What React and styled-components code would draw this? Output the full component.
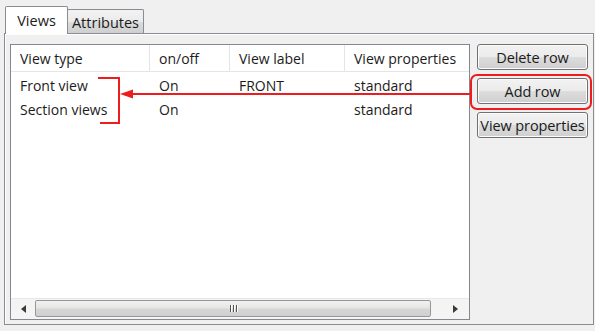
import React from 'react';
import styled, { createGlobalStyle } from 'styled-components';

const GlobalStyle = createGlobalStyle`
  html, body {
    margin: 0;
    padding: 0;
    background: #f0f0f0;
  }
  body {
    font-family: 'Open Sans', 'Noto Sans', 'DejaVu Sans', sans-serif;
    font-size: 14px;
    color: #1b1b1b;
  }
`;

const Window = styled.div`
  position: relative;
  width: 595px;
  height: 331px;
  padding-top: 6px;
  box-sizing: border-box;
  background: #f0f0f0;
  overflow: hidden;
`;

const TabBar = styled.div`
  display: flex;
  align-items: flex-end;
  height: 27px;
  padding-left: 5px;
  position: relative;
  z-index: 1;
`;

const Tab = styled.div`
  box-sizing: border-box;
  display: flex;
  align-items: center;
  justify-content: center;
  border: 1px solid #898c95;
  border-bottom: none;
  border-radius: 2px 2px 0 0;
  width: ${(p) => p.$width}px;
  height: ${(p) => (p.$active ? 28 : 24)}px;
  margin-bottom: ${(p) => (p.$active ? -1 : 0)}px;
  margin-left: ${(p) => (p.$active ? 0 : -1)}px;
  padding-top: ${(p) => (p.$active ? 0 : 1)}px;
  background: ${(p) =>
    p.$active ? '#ffffff' : 'linear-gradient(#f2f2f2, #ebebeb 50%, #dddddd 51%, #cfcfcf)'};
  font-size: 14.5px;
  color: #1b1b1b;
`;

const Panel = styled.div`
  box-sizing: border-box;
  margin-left: 4px;
  width: 590px;
  height: 292px;
  border: 1px solid #898c95;
  box-shadow: inset 1px 1px 0 #ffffff;
  background: #f0f0f0;
  display: flex;
  gap: 7px;
  padding: 10px 5px 4px 5px;
`;

const TableBox = styled.div`
  box-sizing: border-box;
  width: 460px;
  height: 276px;
  border: 1px solid #828790;
  background: #ffffff;
  display: flex;
  flex-direction: column;
`;

const COLS = '139px 80px 115px 1fr';

const HeaderRow = styled.div`
  display: grid;
  grid-template-columns: ${COLS};
  height: 26px;
  border-bottom: 1px solid #e5e5e5;
  flex-shrink: 0;
`;

const HeaderCell = styled.div`
  display: flex;
  align-items: center;
  padding-left: 9px;
  border-right: ${(p) => (p.$last ? 'none' : '1px solid #e5e5e5')};
  white-space: nowrap;
`;

const Body = styled.div`
  flex: 1;
  padding-top: 1px;
`;

const Row = styled.div`
  display: grid;
  grid-template-columns: ${COLS};
  height: 24px;
`;

const Cell = styled.div`
  display: flex;
  align-items: center;
  padding-left: 9px;
  white-space: nowrap;
`;

const ScrollBar = styled.div`
  display: flex;
  height: 20px;
  flex-shrink: 0;
  background: #f4f4f4;
  border-top: 1px solid #e8e8e8;
`;

const ArrowButton = styled.div`
  width: ${(p) => p.$width}px;
  display: flex;
  align-items: center;
  justify-content: center;
  padding-left: ${(p) => (p.$dir === 'right' ? 11 : 0)}px;
  box-sizing: border-box;

  &::before {
    content: '';
    width: 0;
    height: 0;
    border-top: 4px solid transparent;
    border-bottom: 4px solid transparent;
    ${(p) =>
      p.$dir === 'left'
        ? 'border-right: 5px solid #3a3a3a;'
        : 'border-left: 5px solid #3a3a3a;'}
  }
`;

const Thumb = styled.div`
  flex: 1;
  margin: 1px 0 2px;
  border: 1px solid #979797;
  border-radius: 2px;
  background: linear-gradient(#f1f1f1, #e6e6e6 45%, #d6d6d6 55%, #cfcfcf);
  display: flex;
  align-items: center;
  justify-content: center;
  gap: 2px;
`;

const Grip = styled.span`
  width: 1px;
  height: 7px;
  background: #555;
  box-shadow: 1px 0 0 #fff;
`;

const ButtonColumn = styled.div`
  display: flex;
  flex-direction: column;
  gap: 8px;
`;

const Button = styled.div`
  box-sizing: border-box;
  width: 111px;
  height: 26px;
  border: 1px solid #707070;
  border-radius: 3px;
  background: linear-gradient(#f2f2f2, #ebebeb 50%, #dddddd 51%, #cfcfcf);
  box-shadow: inset 0 0 0 1px #fcfcfc;
  display: flex;
  align-items: center;
  justify-content: center;
  font-size: 14.5px;
  letter-spacing: -0.1px;
  color: #1b1b1b;
  white-space: nowrap;
`;

const Annotation = styled.svg`
  position: absolute;
  left: 0;
  top: 0;
  pointer-events: none;
`;

const rows = [
  ['Front view', 'On', 'FRONT', 'standard'],
  ['Section views', 'On', '', 'standard'],
];

const headers = ['View type', 'on/off', 'View label', 'View properties'];

export default function App() {
  return (
    <>
      <GlobalStyle />
      <Window>
        <TabBar>
          <Tab $active $width={63}>Views</Tab>
          <Tab $width={77}>Attributes</Tab>
        </TabBar>
        <Panel>
          <TableBox>
            <HeaderRow>
              {headers.map((h, i) => (
                <HeaderCell key={h} $last={i === headers.length - 1}>
                  {h}
                </HeaderCell>
              ))}
            </HeaderRow>
            <Body>
              {rows.map((r) => (
                <Row key={r[0]}>
                  {r.map((c, i) => (
                    <Cell key={i}>{c}</Cell>
                  ))}
                </Row>
              ))}
            </Body>
            <ScrollBar>
              <ArrowButton $width={24} $dir="left" />
              <Thumb>
                <Grip />
                <Grip />
                <Grip />
              </Thumb>
              <ArrowButton $width={38} $dir="right" />
            </ScrollBar>
          </TableBox>
          <ButtonColumn>
            <Button>Delete row</Button>
            <Button>Add row</Button>
            <Button>View properties</Button>
          </ButtonColumn>
        </Panel>
        <Annotation width="595" height="331" viewBox="0 0 595 331">
          <path d="M98 78 H119 V123 H100" fill="none" stroke="#ee1c1c" strokeWidth="2" />
          <path d="M130 94 H471" fill="none" stroke="#ee1c1c" strokeWidth="2" />
          <polygon points="120,94 133,89.5 133,98.5" fill="#ee1c1c" />
          <rect x="471" y="75" width="120" height="34" rx="6" fill="none" stroke="#ee1c1c" strokeWidth="2" />
        </Annotation>
      </Window>
    </>
  );
}
